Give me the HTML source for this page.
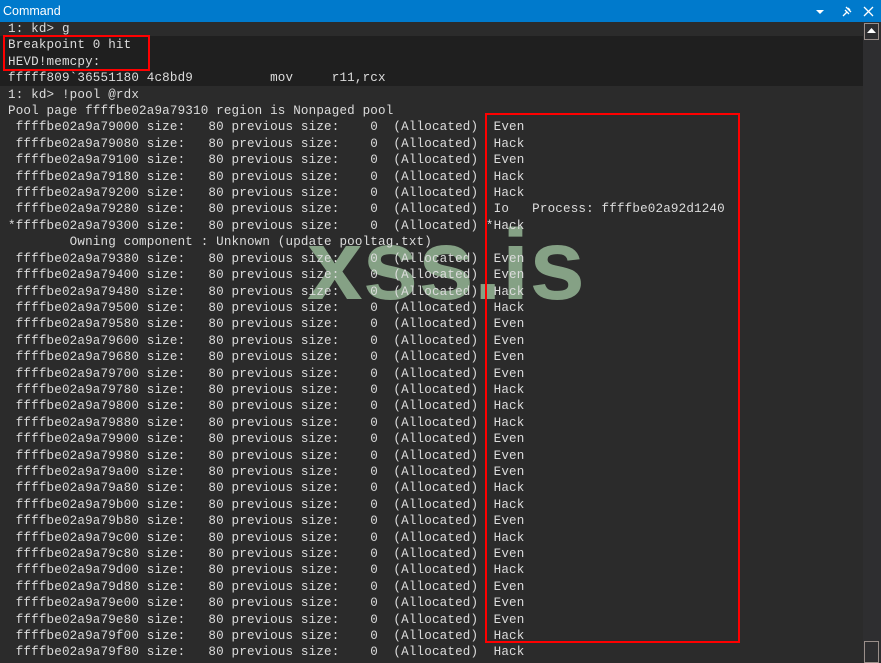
<!DOCTYPE html>
<html><head><meta charset="utf-8"><style>
html,body{margin:0;padding:0;width:881px;height:661px;overflow:hidden;background:#2b2b2b;}
.title{position:absolute;left:0;top:0;width:881px;height:22px;background:#007acc;color:#fff;font:12.5px "Liberation Sans",sans-serif;line-height:22px;}
.title span{position:absolute;left:3px;top:0;}
.dark{position:absolute;left:0;top:36px;width:863px;height:50px;background:#1f1f1f;}
.sb{position:absolute;left:863px;top:22px;width:18px;height:639px;background:#2e2e30;}
.btn{position:absolute;left:864px;top:23px;width:13px;height:15px;border:1px solid #9a8f8a;}
.btn2{position:absolute;left:864px;top:641px;width:13px;height:20px;border:1px solid #9a8f8a;}
.wm{position:absolute;left:307px;top:208px;font:bold 100px "Liberation Sans",sans-serif;color:#85a185;}
pre{position:absolute;left:8px;top:21px;margin:0;font:12.58px "Liberation Mono",monospace;letter-spacing:0.16px;line-height:16.4px;color:#dcdcdc;white-space:pre;}
.box{position:absolute;border:2px solid #ff0000;}
</style></head><body>
<div class="title"><span>Command</span>
<svg style="position:absolute;left:815px;top:6px" width="60" height="12">
<polygon points="1,4 9,4 5,8" fill="#fff"/>
<path d="M31,1 L36,6 M30,4 L34,8 M32,6 L28,10 M33,2 L35,4" stroke="#fff" stroke-width="1.3" fill="none"/>
<path d="M49,1 L58,10 M58,1 L49,10" stroke="#fff" stroke-width="1.3"/>
</svg></div>
<div class="dark"></div>
<div class="sb"></div><div class="btn"><svg width="13" height="15"><polygon points="2,9 11,9 6.5,4" fill="#fff"/></svg></div><div class="btn2"></div>
<div class="wm">xss.is</div>
<pre>1: kd&gt; g
Breakpoint 0 hit
HEVD!memcpy:
fffff809`36551180 4c8bd9          mov     r11,rcx
1: kd&gt; !pool @rdx
Pool page ffffbe02a9a79310 region is Nonpaged pool
 ffffbe02a9a79000 size:   80 previous size:    0  (Allocated)  Even
 ffffbe02a9a79080 size:   80 previous size:    0  (Allocated)  Hack
 ffffbe02a9a79100 size:   80 previous size:    0  (Allocated)  Even
 ffffbe02a9a79180 size:   80 previous size:    0  (Allocated)  Hack
 ffffbe02a9a79200 size:   80 previous size:    0  (Allocated)  Hack
 ffffbe02a9a79280 size:   80 previous size:    0  (Allocated)  Io   Process: ffffbe02a92d1240
*ffffbe02a9a79300 size:   80 previous size:    0  (Allocated) *Hack
        Owning component : Unknown (update pooltag.txt)
 ffffbe02a9a79380 size:   80 previous size:    0  (Allocated)  Even
 ffffbe02a9a79400 size:   80 previous size:    0  (Allocated)  Even
 ffffbe02a9a79480 size:   80 previous size:    0  (Allocated)  Hack
 ffffbe02a9a79500 size:   80 previous size:    0  (Allocated)  Hack
 ffffbe02a9a79580 size:   80 previous size:    0  (Allocated)  Even
 ffffbe02a9a79600 size:   80 previous size:    0  (Allocated)  Even
 ffffbe02a9a79680 size:   80 previous size:    0  (Allocated)  Even
 ffffbe02a9a79700 size:   80 previous size:    0  (Allocated)  Even
 ffffbe02a9a79780 size:   80 previous size:    0  (Allocated)  Hack
 ffffbe02a9a79800 size:   80 previous size:    0  (Allocated)  Hack
 ffffbe02a9a79880 size:   80 previous size:    0  (Allocated)  Hack
 ffffbe02a9a79900 size:   80 previous size:    0  (Allocated)  Even
 ffffbe02a9a79980 size:   80 previous size:    0  (Allocated)  Even
 ffffbe02a9a79a00 size:   80 previous size:    0  (Allocated)  Even
 ffffbe02a9a79a80 size:   80 previous size:    0  (Allocated)  Hack
 ffffbe02a9a79b00 size:   80 previous size:    0  (Allocated)  Hack
 ffffbe02a9a79b80 size:   80 previous size:    0  (Allocated)  Even
 ffffbe02a9a79c00 size:   80 previous size:    0  (Allocated)  Hack
 ffffbe02a9a79c80 size:   80 previous size:    0  (Allocated)  Even
 ffffbe02a9a79d00 size:   80 previous size:    0  (Allocated)  Hack
 ffffbe02a9a79d80 size:   80 previous size:    0  (Allocated)  Even
 ffffbe02a9a79e00 size:   80 previous size:    0  (Allocated)  Even
 ffffbe02a9a79e80 size:   80 previous size:    0  (Allocated)  Even
 ffffbe02a9a79f00 size:   80 previous size:    0  (Allocated)  Hack
 ffffbe02a9a79f80 size:   80 previous size:    0  (Allocated)  Hack</pre>
<div class="box" style="left:3px;top:35px;width:143px;height:32px"></div>
<div class="box" style="left:485px;top:113px;width:251px;height:526px"></div>
</body></html>
